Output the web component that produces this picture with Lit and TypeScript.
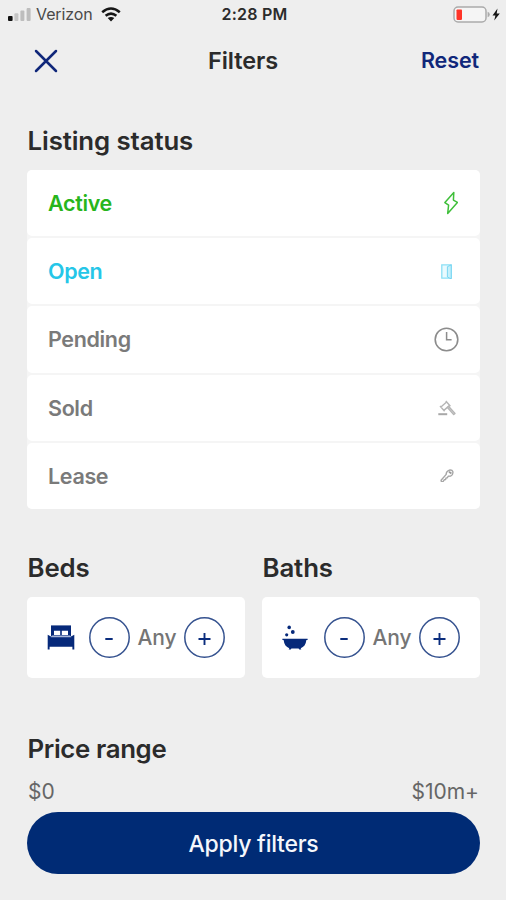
import { LitElement, html, css, svg } from "lit";
import { customElement, property } from "lit/decorators.js";
import { classMap } from "lit/directives/class-map.js";

const icons: Record<string, unknown> = {
  bolt: svg`<path d="M9.8 1.4.9 11.6l3.7 2.6L3.7 22.4 13.4 11.4l-4-2.3z" fill="none" stroke="#3fbf3a" stroke-width="1.5" stroke-linejoin="round"/>`,
  door: svg`<path d="M.8.9h9.4v13.2H.8z" fill="#e9fafe" stroke="#8bdff5" stroke-width="1.3"/><path d="M6.4 2.7 10.2.9v14L6.4 13z" fill="#c5f0fb" stroke="#6fd3f0" stroke-width=".9"/>`,
  clock: svg`<circle cx="12.5" cy="12.5" r="11.3" fill="none" stroke="#8c8c8c" stroke-width="1.6"/><path d="M12.6 5v7.8h5" fill="none" stroke="#8c8c8c" stroke-width="1.5"/>`,
  gavel: svg`<g fill="none" stroke="#b5b5b5" stroke-width="1.4" stroke-linejoin="round"><path d="M2.9 7 8.6 2l3 3.4-5.7 5zM2 6l4.6 5.2M7.8 1l4.6 5.2"/><path d="m9.5 7.6 1.2-1.1 6.3 6.9-1.3 1.2z" fill="#d5d5d5"/><path d="M.3 14.2h8.9" stroke-width="2" stroke="#a8a8a8"/></g>`,
  key: svg`<path d="M1.1 11.3 6.2 5.4Q6 2.4 9 1.3q3-.8 3.8 1.3.6 3.2-2.2 4.5l-2.4.2-1 1.5-1.3.3-.3 1.4-1.4.3-1 1.6-1.8.2z" fill="none" stroke="#a6a6a6" stroke-width="1.4" stroke-linejoin="round"/><path d="m9 2.8 2.4 1.7" stroke="#999" stroke-width="1.7"/>`,
};

const statuses = [
  { label: "Active", tone: "active", icon: "bolt", w: 14, h: 24 },
  { label: "Open", tone: "open", icon: "door", w: 11, h: 15 },
  { label: "Pending", tone: "", icon: "clock", w: 25, h: 25 },
  { label: "Sold", tone: "", icon: "gavel", w: 18, h: 16 },
  { label: "Lease", tone: "", icon: "key", w: 14, h: 13 },
];

@customElement("room-counter")
export class RoomCounter extends LitElement {
  @property() label = "";
  @property() kind = "bed";

  static styles = css`
    :host { display: block; color: #757575; }
    h2 { margin: 0; padding-left: 0.5px; font: 600 25.8px/32px Inter, sans-serif; color: #2b2b2b; height: 45px; letter-spacing: -0.1px; }
    .card { display: flex; align-items: center; height: 81px; background: #fff; border-radius: 5px; padding: 0 20px; box-sizing: border-box; }
    .glyph { width: 28px; height: 26px; flex: none; margin-right: 14px; }
    .round { flex: none; width: 41px; height: 41px; padding: 0; border: 0; background: none; }
    .any { flex: 1; text-align: center; font: 500 21px/28px Inter, sans-serif; letter-spacing: -0.1px; }
    svg { display: block; }
  `;

  render() {
    return html`
      <h2>${this.label}</h2>
      <div class="card">
        <svg class="glyph" viewBox="0 0 28 26" fill="#06297a">
          ${this.kind === "bed"
            ? svg`<path d="M4 .4h20v11H4z"/><path d="M.7 9.8 4 11.4h20l3.3-1.6v14.8h-1.9v-2.8H2.6v2.8H.7z"/><path d="M7 5.7h6.2v4.4H7zM14.8 5.7H21v4.4h-6.2z" fill="#fff"/><path d="M5 10.4h18l1.4 1.8H3.6z" fill="#a9b8da"/>`
            : svg`<path d="M.4 13.7h25.2v1.4h-1.2c-.5 4.5-2.6 7.2-5.7 8.1l.6 1.4h-2l-.7-1H9.4l-.7 1h-2l.6-1.4c-3.1-.9-5.2-3.6-5.7-8.1H.4z"/><circle cx="7.2" cy="2.4" r="1.8"/><circle cx="10.8" cy="7" r="1.9"/><circle cx="4.7" cy="9.8" r="1.6"/>`}
        </svg>
        <button class="round" aria-label="Fewer"><svg width="41" height="41" fill="none"><circle cx="20.5" cy="20.5" r="19.7" stroke="#35528f" stroke-width="1.5"/><path d="M16.3 22h7.4" stroke="#0b2d7d" stroke-width="2"/></svg></button>
        <span class="any">Any</span>
        <button class="round" aria-label="More"><svg width="41" height="41" fill="none"><circle cx="20.5" cy="20.5" r="19.7" stroke="#35528f" stroke-width="1.5"/><path d="M14.5 22h12M20.5 16v12" stroke="#0b2d7d" stroke-width="1.9"/></svg></button>
      </div>
    `;
  }
}

@customElement("app-root")
export class AppRoot extends LitElement {
  static styles = css`
    :host { display: flex; flex-direction: column; height: 900px; background: #eee; font-family: Inter, sans-serif; color: #2b2b2b; overflow: hidden; }
    svg { display: block; flex: none; }
    .status { display: grid; grid-template-columns: 1fr auto 1fr; align-items: center; height: 29px; padding: 0 5px 0 8px; }
    .carrier { display: flex; align-items: center; font-size: 16px; color: #494949; }
    .carrier span { margin: 0 8px 0 5px; letter-spacing: -0.1px; position: relative; top: -0.5px; }
    .time { font-size: 16px; line-height: 20px; font-weight: 600; letter-spacing: 0.25px; margin-top: -1px; }
    .battery { justify-self: end; }
    header { display: grid; grid-template-columns: 174px auto 1fr; align-items: center; height: 64px; padding: 0 27px 0 34px; box-sizing: border-box; }
    h1 { margin: 0; font-size: 23.5px; line-height: 30px; font-weight: 600; letter-spacing: -0.1px; }
    .reset { justify-self: end; font-size: 21.5px; line-height: 28px; margin-top: -2px; font-weight: 600; letter-spacing: -0.1px; color: #10277a; }
    main { padding: 0 26px 0 27px; }
    h2 { margin: 0; padding-left: 0.5px; font-size: 25.8px; line-height: 32px; font-weight: 600; letter-spacing: -0.1px; }
    .listing { padding-top: 32px; height: 45px; }
    .rows { display: grid; grid-auto-rows: 1fr; gap: 2px; height: 339px; background: #f5f5f5; border-radius: 5px; }
    .row { display: flex; align-items: center; justify-content: space-between; padding: 0 21px; background: #fff; border-radius: 5px; font-size: 21.5px; font-weight: 600; letter-spacing: -0.35px; color: #7a7a7a; }
    .active { color: #27b51b; }
    .open { color: #25c6e8; }
    .icon { width: 25px; display: grid; place-items: center; }
    .active .icon { padding-left: 9px; box-sizing: border-box; }
    .counters { display: grid; grid-template-columns: 218px 218px; justify-content: space-between; padding-top: 43px; }
    .price { padding-top: 55px; letter-spacing: -0.35px; }
    .range { display: flex; justify-content: space-between; padding: 13px 1px 0; font-size: 21px; line-height: 27px; color: #666; }
    .apply { display: block; width: 100%; height: 62px; margin-top: 7px; padding: 2px 0 0; border: 0; border-radius: 31px; background: #002b75; color: #f5f7fc; font: 450 23px Inter, sans-serif; letter-spacing: -0.25px; }
  `;

  render() {
    return html`
      <div class="status">
        <div class="carrier">
          <svg width="23" height="14">
            <rect x="0" y="8" width="4.6" height="5" rx="1" fill="#111"/>
            <rect x="6.4" y="5.2" width="4" height="7.8" rx="1" fill="#c5c5c5"/>
            <rect x="12.4" y="2.4" width="4" height="10.6" rx="1" fill="#bdbdbd"/>
            <rect x="18.6" y="0" width="4" height="13" rx="1" fill="#bdbdbd"/>
          </svg>
          <span>Verizon</span>
          <svg width="20" height="15" viewBox="0 0 20 15" fill="none" stroke="#161616" stroke-width="2.5">
            <path d="M1.2 5.3q8.8-7.7 17.6 0M4.6 8.8q5.4-4.4 10.8 0"/>
            <path d="m6.7 11.1 3.3 3.4 3.3-3.4q-3.3-2.3-6.6 0z" fill="#161616" stroke="none"/>
          </svg>
        </div>
        <div class="time">2:28 PM</div>
        <svg class="battery" width="48" height="18" viewBox="0 0 48 18">
          <rect x="1" y="1" width="32" height="15" rx="4" fill="#f5f5f5" stroke="#aaa" stroke-width="1.5"/>
          <rect x="3.5" y="3.4" width="5.5" height="10.5" rx=".8" fill="#ff3428"/>
          <path d="M34.6 5.8q2.2.5 2.2 2.7t-2.2 2.7z" fill="#aaa"/>
          <path d="m44.5 2.6-5 6.8h2.9l-1.2 5 5.6-7h-3.1z" fill="#161616"/>
        </svg>
      </div>
      <header>
        <svg width="24" height="24"><path d="m2 2 20 20M22 2 2 22" stroke="#10277a" stroke-width="2.5" stroke-linecap="round"/></svg>
        <h1>Filters</h1>
        <span class="reset">Reset</span>
      </header>
      <main>
        <h2 class="listing">Listing status</h2>
        <div class="rows">
          ${statuses.map(
            (s) => html`<div class=${classMap({ row: true, active: s.tone === "active", open: s.tone === "open" })}>
              <span>${s.label}</span>
              <span class="icon"><svg width=${s.w} height=${s.h}>${icons[s.icon]}</svg></span>
            </div>`
          )}
        </div>
        <div class="counters">
          <room-counter label="Beds" kind="bed"></room-counter>
          <room-counter label="Baths" kind="bath"></room-counter>
        </div>
        <h2 class="price">Price range</h2>
        <div class="range"><span>$0</span><span>$10m+</span></div>
        <button class="apply">Apply filters</button>
      </main>
    `;
  }
}
